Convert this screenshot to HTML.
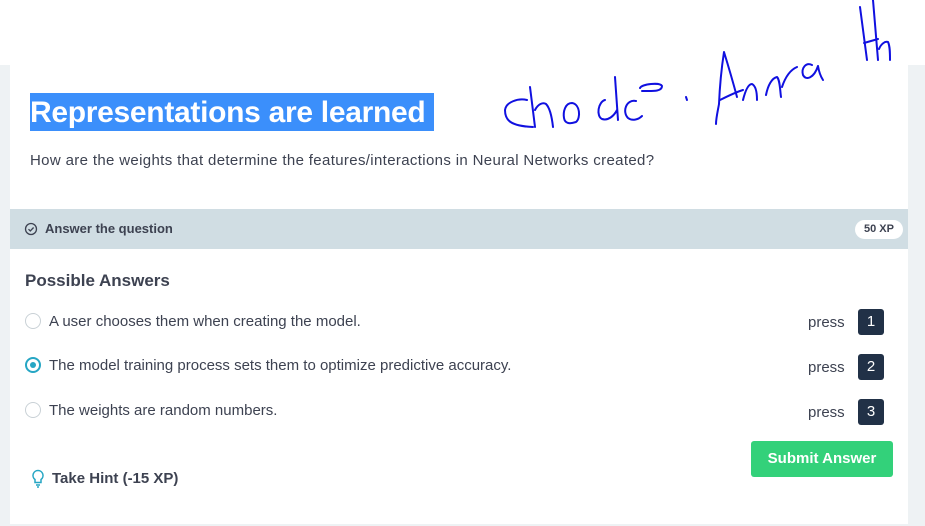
<!DOCTYPE html>
<html><head><style>
body{margin:0;width:925px;height:526px;background:#fff;font-family:"Liberation Sans",sans-serif;position:relative;overflow:hidden;color:#3d4251}
.bg{position:absolute;left:0;top:65px;width:925px;height:461px;background:#eef2f4}
.card{position:absolute;left:10px;top:65px;width:898px;height:459px;background:#fff}
.a{position:absolute;white-space:nowrap}
.title{left:30px;top:93px;height:38px;width:404px;background:#3b8ffb;color:#fff;font-weight:bold;font-size:30px;line-height:40px;letter-spacing:-0.3px}
.band{position:absolute;left:10px;top:209px;width:898px;height:40px;background:#d0dde3}
.radio{position:absolute;width:14px;height:14px;border:1px solid #c9d1d6;border-radius:50%;background:#fff}
.key{position:absolute;left:858px;width:26px;height:26px;background:#213147;border-radius:3px;color:#fff;font-size:15px;text-align:center;line-height:26px}
.press{left:808px;font-size:15px}
.opt{left:49px;font-size:15px}
</style></head><body>
<div class="bg"></div><div class="card"></div>
<div class="a title">Representations are learned</div>
<div class="a" style="left:30px;top:152px;font-size:15px;letter-spacing:0.35px">How are the weights that determine the features/interactions in Neural Networks created?</div>
<div class="band"></div>
<svg class="a" style="left:24px;top:222px" width="14" height="14" viewBox="0 0 14 14"><circle cx="7" cy="7" r="5.5" fill="none" stroke="#3d4251" stroke-width="1.3"/><path d="M4.5 7.2l1.8 1.8 3.3-3.5" fill="none" stroke="#3d4251" stroke-width="1.3"/></svg>
<div class="a" style="left:45px;top:221px;font-size:13px;font-weight:bold">Answer the question</div>
<div class="a" style="left:855px;top:220px;width:48px;height:19px;background:#fff;border-radius:10px;font-size:11px;font-weight:bold;text-align:center;line-height:19px">50 XP</div>
<div class="a" style="left:25px;top:271px;font-size:17px;font-weight:bold;color:#3d4251">Possible Answers</div>
<div class="radio" style="left:25px;top:313px"></div>
<div class="a opt" style="top:313px">A user chooses them when creating the model.</div>
<div class="radio" style="left:25px;top:357px;border:2px solid #26a6c4;width:12px;height:12px"><div style="position:absolute;left:3px;top:3px;width:6px;height:6px;border-radius:50%;background:#26a6c4"></div></div>
<div class="a opt" style="top:357px">The model training process sets them to optimize predictive accuracy.</div>
<div class="radio" style="left:25px;top:402px"></div>
<div class="a opt" style="top:402px">The weights are random numbers.</div>
<div class="a press" style="top:314px">press</div><div class="key" style="top:309px">1</div>
<div class="a press" style="top:359px">press</div><div class="key" style="top:354px">2</div>
<div class="a press" style="top:404px">press</div><div class="key" style="top:399px">3</div>
<div class="a" style="left:751px;top:441px;width:142px;height:36px;background:#33d17a;border-radius:3px;color:#fff;font-weight:bold;font-size:15px;text-align:center;line-height:36px">Submit Answer</div>
<svg class="a" style="left:31px;top:469px" width="14" height="20" viewBox="0 0 14 20"><path d="M7 1.5a5 5 0 0 0-3 9v3h6v-3a5 5 0 0 0-3-9zM5 16h4M6 18h2" fill="none" stroke="#26a6c4" stroke-width="1.5"/></svg>
<div class="a" style="left:52px;top:470px;font-size:15px;font-weight:bold">Take Hint (-15 XP)</div>
<svg class="a" style="left:0;top:0" width="925" height="140" fill="none" stroke="#1010e0" stroke-width="2" stroke-linecap="round" stroke-linejoin="round">
<path d="M527 100C518 98 506 102 505 110C505 120 510 126 533 127"/>
<path d="M530 87L535 127M535 110C538 104 543 102 546 104C550 108 552 118 553 127"/>
<path d="M572 103C565 103 563 112 564 118C565 124 570 124 576 122C581 118 580 104 572 103Z"/>
<path d="M605 100C598 102 596 116 602 119C608 121 614 116 617 110M615 77L618 120"/>
<path d="M636 101C626 99 622 112 628 118C632 121 638 120 642 116M640 88C642 84 660 82 662 86C662 92 652 91 642 91"/>
<path d="M686 97L687 100"/>
<path d="M716 124C716 118 718 110 719 104C720 80 722 65 724 52C728 65 733 82 737 97M720 100C728 96 736 92 743 90"/>
<path d="M743 100C745 92 748 84 752 84C756 86 757 94 757 100M766 95C768 85 772 78 777 77C780 80 780 90 781 97M782 87C785 78 790 70 797 67"/>
<path d="M812 65C806 62 801 68 803 75C806 81 814 78 818 66C819 72 821 77 823 80"/>
<path d="M860 7L867 60M864 43L878 39M873 0L878 60M879 49C881 44 885 41 888 42C890 46 890 53 890 60"/>
</svg>
</body></html>
